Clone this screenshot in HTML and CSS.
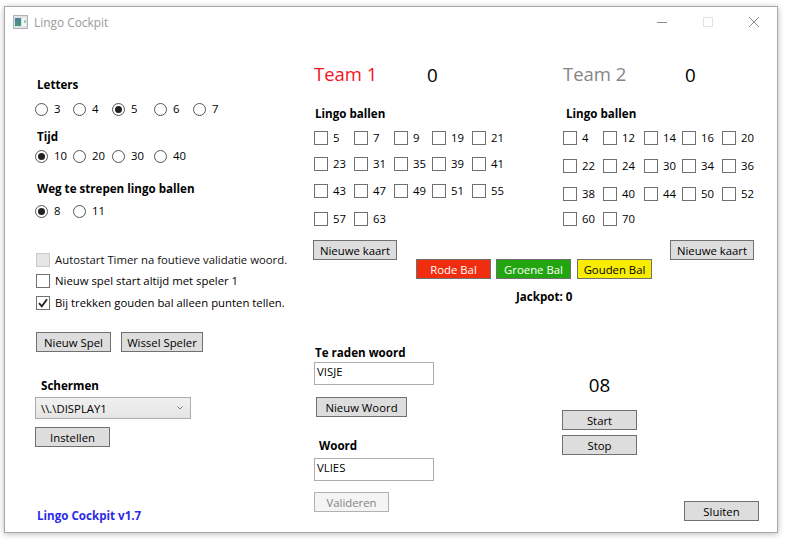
FILE: index.html
```html
<!DOCTYPE html>
<html lang="nl">
<head>
<meta charset="utf-8">
<title>Lingo Cockpit</title>
<link rel="stylesheet" href="styles.css">
</head>
<body>
<div class="window">
  <header class="titlebar">
    <svg class="app-icon" width="15" height="14" viewBox="0 0 15 14"><defs><linearGradient id="g" x1="0" y1="0" x2="0" y2="1"><stop offset="0" stop-color="#4f7f9f"/><stop offset="1" stop-color="#3f9a78"/></linearGradient></defs><rect x="0.5" y="0.5" width="14" height="13" fill="#dfe3e6" stroke="#b0b4b8"/><rect x="2" y="3" width="6" height="8" fill="url(#g)"/><rect x="9" y="3" width="4" height="8" fill="#f4f7f6"/><rect x="11" y="5" width="2" height="3" fill="#8fcfb0"/></svg>
    <span class="app-title">Lingo Cockpit</span>
    <div class="win-controls">
      <svg width="12" height="12" viewBox="0 0 12 12"><path d="M1 6.5H11" stroke="#8f8f8f" fill="none"/></svg>
      <svg width="12" height="12" viewBox="0 0 12 12"><rect x="1.5" y="1.5" width="9" height="9" stroke="#e2e2e2" fill="none"/></svg>
      <svg width="12" height="12" viewBox="0 0 12 12"><path d="M1 1L11 11M11 1L1 11" stroke="#8f8f8f" fill="none"/></svg>
    </div>
  </header>
  <main class="content">
    <section class="left">
      <div class="label letters">Letters</div>
      <div class="radios r-letters">
        <label class="opt"><span class="radio"></span>3</label>
        <label class="opt"><span class="radio"></span>4</label>
        <label class="opt"><span class="radio on"></span>5</label>
        <label class="opt"><span class="radio"></span>6</label>
        <label class="opt"><span class="radio"></span>7</label>
      </div>
      <div class="label tijd">Tijd</div>
      <div class="radios r-tijd">
        <label class="opt"><span class="radio on"></span>10</label>
        <label class="opt"><span class="radio"></span>20</label>
        <label class="opt"><span class="radio"></span>30</label>
        <label class="opt"><span class="radio"></span>40</label>
      </div>
      <div class="label weg">Weg te strepen lingo ballen</div>
      <div class="radios r-weg">
        <label class="opt"><span class="radio on"></span>8</label>
        <label class="opt"><span class="radio"></span>11</label>
      </div>
      <div class="opt check c1"><span class="box off"></span>Autostart Timer na foutieve validatie woord.</div>
      <div class="opt check c2"><span class="box"></span>Nieuw spel start altijd met speler 1</div>
      <div class="opt check c3"><span class="box"><svg width="12" height="12" viewBox="0 0 12 12"><path d="M2 6.2L4.8 9.4L10 2.2" stroke="#222" stroke-width="1.8" fill="none"/></svg></span>Bij trekken gouden bal alleen punten tellen.</div>
      <div class="game-buttons">
        <button class="btn w75">Nieuw Spel</button>
        <button class="btn w82">Wissel Speler</button>
      </div>
      <div class="label schermen">Schermen</div>
      <div class="combo">\\.\DISPLAY1<svg width="6" height="4" viewBox="0 0 6 4"><path d="M0.5 0.5L3 3L5.5 0.5" stroke="#777" fill="none"/></svg></div>
      <button class="btn w75 instellen">Instellen</button>
      <div class="label version">Lingo Cockpit v1.7</div>
    </section>

    <section class="right">
      <div class="teams">
        <div class="team team-a">
          <div class="team-head"><span class="team-name red">Team 1</span><span class="score">0</span></div>
          <div class="label balls-title">Lingo ballen</div>
          <div class="balls">
            <label class="opt"><span class="box"></span>5</label>
            <label class="opt"><span class="box"></span>7</label>
            <label class="opt"><span class="box"></span>9</label>
            <label class="opt"><span class="box"></span>19</label>
            <label class="opt"><span class="box"></span>21</label>
            <label class="opt"><span class="box"></span>23</label>
            <label class="opt"><span class="box"></span>31</label>
            <label class="opt"><span class="box"></span>35</label>
            <label class="opt"><span class="box"></span>39</label>
            <label class="opt"><span class="box"></span>41</label>
            <label class="opt"><span class="box"></span>43</label>
            <label class="opt"><span class="box"></span>47</label>
            <label class="opt"><span class="box"></span>49</label>
            <label class="opt"><span class="box"></span>51</label>
            <label class="opt"><span class="box"></span>55</label>
            <label class="opt"><span class="box"></span>57</label>
            <label class="opt"><span class="box"></span>63</label>
          </div>
          <button class="btn kaart">Nieuwe kaart</button>
        </div>
        <div class="team team-b">
          <div class="team-head"><span class="team-name grey">Team 2</span><span class="score">0</span></div>
          <div class="label balls-title">Lingo ballen</div>
          <div class="balls">
            <label class="opt"><span class="box"></span>4</label>
            <label class="opt"><span class="box"></span>12</label>
            <label class="opt"><span class="box"></span>14</label>
            <label class="opt"><span class="box"></span>16</label>
            <label class="opt"><span class="box"></span>20</label>
            <label class="opt"><span class="box"></span>22</label>
            <label class="opt"><span class="box"></span>24</label>
            <label class="opt"><span class="box"></span>30</label>
            <label class="opt"><span class="box"></span>34</label>
            <label class="opt"><span class="box"></span>36</label>
            <label class="opt"><span class="box"></span>38</label>
            <label class="opt"><span class="box"></span>40</label>
            <label class="opt"><span class="box"></span>44</label>
            <label class="opt"><span class="box"></span>50</label>
            <label class="opt"><span class="box"></span>52</label>
            <label class="opt"><span class="box"></span>60</label>
            <label class="opt"><span class="box"></span>70</label>
          </div>
          <button class="btn kaart">Nieuwe kaart</button>
        </div>
      </div>
      <div class="ball-row">
        <button class="btn w75 rood">Rode Bal</button>
        <button class="btn w75 groen">Groene Bal</button>
        <button class="btn w75 goud">Gouden Bal</button>
      </div>
      <div class="label jackpot">Jackpot: 0</div>
      <div class="lower">
        <div class="word-col">
          <div class="label raden">Te raden woord</div>
          <div class="field">VISJE</div>
          <button class="btn nieuw-woord">Nieuw Woord</button>
          <div class="label woord">Woord</div>
          <div class="field field-b">VLIES</div>
          <button class="btn w75 valideren" disabled>Valideren</button>
        </div>
        <div class="timer-col">
          <div class="timer">08</div>
          <button class="btn w75 start">Start</button>
          <button class="btn w75 stop">Stop</button>
        </div>
        <button class="btn w75 sluiten">Sluiten</button>
      </div>
    </section>
  </main>
</div>
</body>
</html>
```
FILE: styles.css
```css
* { box-sizing: border-box; }
html, body { margin: 0; padding: 0; }
body {
  width: 785px;
  height: 540px;
  overflow: hidden;
  background: #fff;
  font-family: "Open Sans", "Noto Sans", sans-serif;
  font-size: 11.35px;
  color: #000;
}
.window {
  width: 774px;
  height: 527px;
  margin: 6px 0 0 4px;
  background: #fff;
  border: 1px solid #a8a8a8;
  box-shadow: 0 1px 6px rgba(0, 0, 0, 0.28);
  display: flex;
  flex-direction: column;
}
.titlebar {
  height: 30px;
  flex: none;
  display: flex;
  align-items: center;
  padding-left: 8px;
  color: #9b9b9b;
}
.app-title { margin-left: 6px; font-size: 11.9px; }
.win-controls {
  margin-left: auto;
  margin-right: 17px;
  display: flex;
  gap: 34px;
}
.content { display: flex; flex: 1; }
.left { width: 308px; flex: none; padding-left: 30px; }
.right { flex: 1; }
.label { height: 16px; line-height: 17px; font-size: 11.6px; font-weight: 700; white-space: nowrap; }
.opt { display: flex; align-items: center; height: 16px; line-height: 16px; white-space: nowrap; }
.radio {
  width: 13px;
  height: 13px;
  flex: none;
  margin-right: 6px;
  border: 1px solid #555;
  border-radius: 50%;
  display: flex;
  align-items: center;
  justify-content: center;
}
.radio.on::after {
  content: "";
  width: 7px;
  height: 7px;
  border-radius: 50%;
  background: #222;
}
.box {
  width: 14px;
  height: 14px;
  flex: none;
  margin-right: 5px;
  border: 1px solid #707070;
  background: #fff;
  display: flex;
  align-items: center;
  justify-content: center;
}
.box.off { background: #e6e6e6; border-color: #c9c9c9; }
.radios { display: grid; }
.r-letters, .r-tijd { grid-template-columns: 38px 39px 42px 39px auto; }
.r-weg { grid-template-columns: 38px auto; }
.letters { margin: 39px 0 0 2px; }
.r-letters { margin-top: 9px; }
.tijd { margin: 11px 0 0 2px; }
.r-tijd { margin-top: 4px; }
.weg { margin: 16px 0 0 2px; }
.r-weg { margin-top: 7px; }
.check { margin-left: 1px; }
.c1 { margin-top: 33px; color: #111; }
.c2 { margin-top: 5px; }
.c3 { margin-top: 6px; }
.btn {
  height: 20px;
  padding: 0;
  display: block;
  background: #ddd;
  border: 1px solid #707070;
  border-radius: 0;
  font: inherit;
  color: #000;
}
.w75 { width: 75px; }
.w82 { width: 82px; }
.game-buttons { display: flex; gap: 10px; margin: 21px 0 0 1px; }
.schermen { margin: 25px 0 0 6px; }
.combo {
  width: 156px;
  height: 22px;
  margin-top: 4px;
  padding: 0 7px 0 5px;
  display: flex;
  align-items: center;
  justify-content: space-between;
  background: linear-gradient(#f0f0f0, #e5e5e5);
  border: 1px solid #acacac;
}
.instellen { margin-top: 8px; }
.version { margin: 60px 0 0 2px; color: #2b2be6; }
.teams { display: flex; height: 223px; }
.team { flex: none; }
.team-a { width: 250px; }
.team-b { width: 191px; }
.team-head { display: flex; align-items: center; height: 24px; margin-top: 26px; }
.team-a .team-head { padding-left: 1px; }
.team-name { font-size: 18.5px; line-height: 24px; margin-bottom: 2px; }
.team-a .team-name { width: 113px; }
.team-b .team-name { width: 122px; }
.score { font-size: 18.8px; }
.red { color: #f5121e; }
.grey { color: #868686; }
.balls-title { margin-top: 18px; }
.team-a .balls-title { margin-left: 2px; }
.team-b .balls-title { margin-left: 3px; }
.balls { display: grid; margin-top: 9px; height: 97px; }
.team-a .balls { margin-left: 1px; grid-template-columns: 40px 40px 38px 40px auto; grid-template-rows: 26px 27px 28px 16px; }
.team-b .balls { grid-template-columns: 40px 41px 38px 40px auto; grid-template-rows: 28px 28px 25px 16px; }
.kaart { width: 84px; margin-top: 13px; }
.team-b .kaart { margin-left: 107px; }
.ball-row { display: flex; gap: 5px; margin: -1px 0 0 103px; }
.rood { background: #f02d0e; color: #fff; }
.groen { background: #22a50f; color: #fff; }
.goud { background: #f8ec00; margin-left: 1px; }
.jackpot { margin: 9px 0 0 203px; }
.lower { display: flex; align-items: flex-start; margin-top: 40px; }
.word-col { width: 249px; flex: none; }
.raden { margin-left: 2px; }
.field {
  width: 120px;
  height: 23px;
  margin: 2px 0 0 1px;
  padding-left: 2px;
  line-height: 17px;
  border: 1px solid #abadb3;
}
.nieuw-woord { width: 91px; margin: 12px 0 0 3px; }
.woord { margin: 20px 0 0 6px; }
.field-b { margin-top: 5px; }
.valideren { margin: 11px 0 0 1px; background: #f4f4f4; border-color: #adb2b5; color: #838383; }
.timer-col { width: 75px; flex: none; }
.timer { height: 24px; line-height: 24px; margin-top: 29px; text-align: center; font-size: 18.8px; }
.start { margin-top: 13px; }
.stop { margin-top: 5px; }
.sluiten { margin: 157px 0 0 47px; }
```
